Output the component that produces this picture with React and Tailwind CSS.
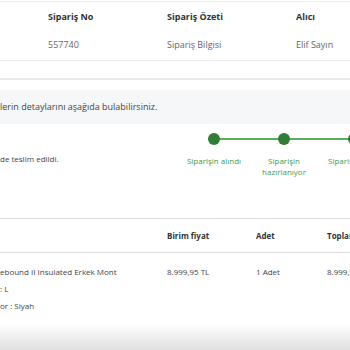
import React from 'react'

const steps = [
  { label: ['Siparişin alındı'] },
  { label: ['Siparişin', 'hazırlanıyor'] },
  { label: ['Siparişiniz kargoya verildi'] },
]

const App = () => {
  return (
    <div className="w-[350px] h-[350px] overflow-hidden bg-white font-['Open_Sans',sans-serif] relative">
      {/* Order summary */}
      <div className="mt-[1px] border-t border-b border-[#ececec] pt-[9px] pb-[9px]">
        <div className="grid grid-cols-[48px_119px_129px_1fr] text-[9px] leading-[12px] font-bold text-[#333]">
          <div />
          <div>Sipariş No</div>
          <div>Sipariş Özeti</div>
          <div>Alıcı</div>
        </div>
        <div className="grid grid-cols-[48px_119px_129px_1fr] mt-[16px] text-[9px] leading-[12px] text-[#666]">
          <div />
          <div>557740</div>
          <div>Sipariş Bilgisi</div>
          <div>Elif Sayın</div>
        </div>
      </div>

      <div className="mt-[17px] border-t-2 border-[#e9e9e9] h-[12px]" />

      {/* Info band */}
      <div className="h-[34px] bg-[#f6f7f9] flex items-center text-[9px] text-[#444] whitespace-nowrap">
        lerin detaylarını aşağıda bulabilirsiniz.
      </div>

      {/* Status */}
      <div className="relative h-[94px]">
        <div className="absolute left-0 top-[29px] text-[8px] leading-[11px] text-[#444] whitespace-nowrap">
          de teslim edildi.
        </div>
        <div className="flex ml-[179px] pt-[9px] w-[240px]">
          {steps.map((step, i) => (
            <div key={i} className="w-[70px] shrink-0 flex flex-col items-center relative">
              {i < steps.length - 1 && (
                <div className="absolute top-[5px] left-[35px] w-[70px] h-[2px] bg-[#58b05f]" />
              )}
              <div className="w-[12px] h-[12px] rounded-full bg-[#2f7d36] relative" />
              <div
                className={
                  i === steps.length - 1
                    ? 'mt-[10px] self-start ml-[9px] text-[8px] leading-[11px] text-[#3f9a48] whitespace-nowrap'
                    : 'mt-[10px] text-[8px] leading-[11px] text-[#3f9a48] text-center whitespace-nowrap'
                }
              >
                {step.label.map((l, j) => (
                  <div key={j}>{l}</div>
                ))}
              </div>
            </div>
          ))}
        </div>
      </div>

      {/* Products table */}
      <div className="border-t border-b border-[#dcdcdc] h-[35px] grid grid-cols-[167px_89px_71px_1fr] items-center text-[8px] font-bold text-[#333] whitespace-nowrap">
        <div />
        <div>Birim fiyat</div>
        <div>Adet</div>
        <div>Toplam</div>
      </div>
      <div className="pt-[10px] grid grid-cols-[167px_89px_71px_1fr] text-[8px] leading-[17px] text-[#444] whitespace-nowrap">
        <div>
          <div>ebound II Insulated Erkek Mont</div>
          <div>: L</div>
          <div>or : Siyah</div>
        </div>
        <div>8.999,95 TL</div>
        <div>1 Adet</div>
        <div>8.999,95 TL</div>
      </div>

      <div className="absolute left-0 right-0 bottom-0 h-[26px] bg-gradient-to-b from-white to-[#e0e0e0]" />
    </div>
  )
}

export default App
